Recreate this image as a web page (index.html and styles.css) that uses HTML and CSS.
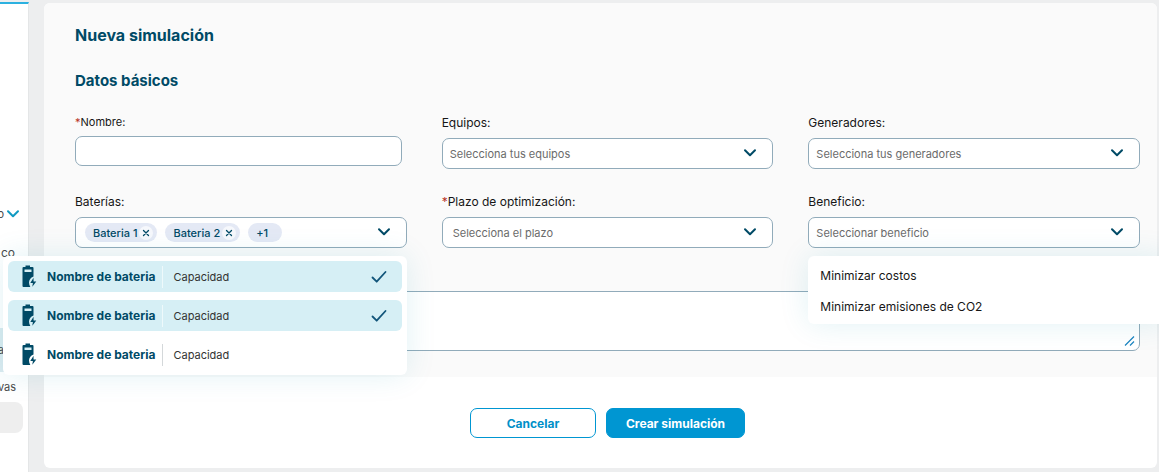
FILE: index.html
```
<!DOCTYPE html>
<html lang="es">
<head>
    <meta charset="utf-8" />
    <title>Nueva simulación</title>
    <link rel="stylesheet" href="styles.css">
</head>
<body>
    <svg width="0" height="0" class="sprite">
        <symbol id="chevron" viewBox="0 0 14 10">
            <path d="M2 2.2l5 5 5-5" fill="none" stroke="currentColor" stroke-width="2" stroke-linecap="round" stroke-linejoin="round" />
        </symbol>
        <symbol id="check" viewBox="0 0 16 14">
            <path d="M1.5 7.5l4.2 4.2L14.5 2" fill="none" stroke="currentColor" stroke-width="1.8" stroke-linecap="round" stroke-linejoin="round" />
        </symbol>
        <symbol id="cross" viewBox="0 0 10 10">
            <path d="M2.5 2.5l5 5m0-5l-5 5" fill="none" stroke="currentColor" stroke-width="1.3" stroke-linecap="round" />
        </symbol>
        <symbol id="battery" viewBox="0 0 16 23">
            <path d="M4.500 0.500h4.500v1.500h2.500a1 1 0 0 1 1 1v8.500c-3 1.200-4.500 3.500-4.500 6 0 1.600.5 3 1.300 4.500H2.500a1 1 0 0 1-1-1V3a1 1 0 0 1 1-1h2z" fill="currentColor" />
            <path d="M3.500 4.500h7v2.500h-7z" fill="#d6eff5" />
            <path d="M12.500 12.800L9.300 18h2.600l-.6 3.700 4-5.200h-2.700z" fill="currentColor" />
        </symbol>
    </svg>

    <div class="layout">
        <aside class="sidebar">
            <div class="side-item side-parent">o <svg width="14" height="10"><use href="#chevron" /></svg></div>
            <div class="side-item">co</div>
            <div class="side-item side-active">a</div>
            <div class="side-item side-last">vas</div>
            <div class="side-block"></div>
        </aside>

        <form class="card">
            <section class="content">
                <h1>Nueva simulación</h1>
                <h2>Datos básicos</h2>

                <div class="fields">
                    <div class="field field-name">
                        <label for="nombre"><span class="req">*</span>Nombre:</label>
                        <input type="text" id="nombre" class="box">
                    </div>
                    <div class="field">
                        <label for="equipos">Equipos:</label>
                        <div class="select">
                            <select id="equipos" class="box"><option>Selecciona tus equipos</option></select>
                            <svg class="arrow" width="14" height="10"><use href="#chevron" /></svg>
                        </div>
                    </div>
                    <div class="field">
                        <label for="generadores">Generadores:</label>
                        <div class="select">
                            <select id="generadores" class="box"><option>Selecciona tus generadores</option></select>
                            <svg class="arrow" width="14" height="10"><use href="#chevron" /></svg>
                        </div>
                    </div>

                    <div class="field">
                        <span class="label" id="baterias">Baterías:</span>
                        <div class="select">
                            <div class="box chips" role="combobox" tabindex="0" aria-labelledby="baterias" aria-expanded="true" aria-controls="lista-baterias">
                                <span class="chip">Bateria 1 <button type="button" aria-label="Quitar"><svg width="10" height="10"><use href="#cross" /></svg></button></span>
                                <span class="chip">Bateria 2 <button type="button" aria-label="Quitar"><svg width="10" height="10"><use href="#cross" /></svg></button></span>
                                <span class="chip chip-more">+1</span>
                            </div>
                            <svg class="arrow" width="14" height="10"><use href="#chevron" /></svg>
                        </div>
                        <ul class="menu menu-baterias" id="lista-baterias" role="listbox">
                            <li class="selected" role="option" aria-selected="true">
                                <svg width="16" height="23"><use href="#battery" /></svg>
                                <b>Nombre de bateria</b>
                                <span>Capacidad</span>
                                <svg class="check" width="16" height="14"><use href="#check" /></svg>
                            </li>
                            <li class="selected" role="option" aria-selected="true">
                                <svg width="16" height="23"><use href="#battery" /></svg>
                                <b>Nombre de bateria</b>
                                <span>Capacidad</span>
                                <svg class="check" width="16" height="14"><use href="#check" /></svg>
                            </li>
                            <li role="option" aria-selected="false">
                                <svg width="16" height="23"><use href="#battery" /></svg>
                                <b>Nombre de bateria</b>
                                <span>Capacidad</span>
                            </li>
                        </ul>
                    </div>
                    <div class="field">
                        <label for="plazo"><span class="req">*</span>Plazo de optimización:</label>
                        <div class="select">
                            <select id="plazo" class="box indent"><option>Selecciona el plazo</option></select>
                            <svg class="arrow" width="14" height="10"><use href="#chevron" /></svg>
                        </div>
                    </div>
                    <div class="field">
                        <label for="beneficio">Beneficio:</label>
                        <div class="select">
                            <select id="beneficio" class="box"><option>Seleccionar beneficio</option></select>
                            <svg class="arrow" width="14" height="10"><use href="#chevron" /></svg>
                        </div>
                        <ul class="menu menu-beneficio" role="listbox">
                            <li role="option">Minimizar costos</li>
                            <li role="option">Minimizar emisiones de CO2</li>
                        </ul>
                    </div>
                </div>

                <div class="notes">
                    <textarea class="box" aria-label="Datos básicos"></textarea>
                    <svg class="grip" width="12" height="12" viewBox="0 0 12 12">
                        <path d="M1 10.500L10 1.500M6 10.500l4-4" fill="none" stroke="#1b84c0" stroke-width="1.200" />
                    </svg>
                </div>
            </section>

            <footer class="actions">
                <button type="button" class="btn btn-cancel">Cancelar</button>
                <button type="submit" class="btn btn-create">Crear simulación</button>
            </footer>
        </form>
    </div>
</body>
</html>
```
FILE: styles.css
```
* {
    box-sizing: border-box;
    margin: 0;
    padding: 0;
}

body {
    background: #edeeef;
    color: #161616;
    font-family: Inter, "Liberation Sans", sans-serif;
    font-size: 12px;
    overflow-x: hidden;
}

button, input, select, textarea {
    font-family: inherit;
    font-size: inherit;
}

.sprite {
    position: absolute;
}

.layout {
    display: flex;
    gap: 15px;
    min-height: 100vh;
    padding: 2px 2px 0 0;
}

/* menu lateral */
.sidebar {
    flex: none;
    width: 29px;
    padding-top: 191px;
    background: #fff;
    border-top: 2px solid #2cb1e0;
    border-right: 1px solid #e4e6e7;
}

.side-item {
    display: flex;
    justify-content: flex-end;
    align-items: center;
    height: 38px;
    padding-right: 13px;
    color: #4a4a4a;
    white-space: nowrap;
}

.side-parent {
    gap: 2px;
    padding-right: 8px;
    font-size: 11px;
}

.side-parent svg {
    flex: none;
    color: #109ac2;
}

.side-active {
    height: 44px;
    margin-top: 57px;
    padding-right: 24px;
    background: #dcebf0;
    font-size: 11px;
}

.side-last {
    height: 30px;
    padding-right: 12px;
    font-size: 11px;
}

.side-block {
    width: 23px;
    height: 31px;
    background: #eee;
    border-radius: 0 8px 8px 0;
}

/* formulario */
.card {
    flex: 1;
    align-self: flex-start;
    min-width: 0;
    margin-top: 1px;
    background: #fff;
    border-radius: 6px;
}

.content {
    padding: 20px 17px 26px 31px;
    background: #fafafa;
    border-radius: 6px 6px 0 0;
}

h1 {
    color: #004a66;
    font-size: 16px;
    line-height: 24px;
}

h2 {
    margin: 24px 0 22px;
    color: #004a66;
    font-size: 15px;
    line-height: 20px;
}

.fields {
    display: grid;
    grid-template-columns: repeat(3, 1fr);
    gap: 23px 35px;
}

.field {
    position: relative;
    min-width: 0;
}

label, .label {
    display: block;
    margin-bottom: 5px;
    line-height: 20px;
}

.field-name {
    margin-right: 5px;
}

.field-name label {
    font-size: 11px;
    line-height: 18px;
}

.req {
    color: #b8321f;
}

.box {
    display: block;
    width: 100%;
    height: 31px;
    padding: 0 7px;
    background: #fff;
    border: 1px solid #91abba;
    border-radius: 7px;
    color: #6b6b6b;
    font-size: 11px;
    appearance: none;
}

.field-name .box {
    height: 30px;
}

.indent {
    padding-left: 10px;
}

.select {
    position: relative;
}

.arrow {
    position: absolute;
    top: 10px;
    right: 16px;
    color: #004a66;
    pointer-events: none;
}

.chips {
    display: flex;
    align-items: center;
    gap: 8px;
    padding-left: 9px;
}

.chip {
    display: flex;
    align-items: center;
    gap: 2px;
    height: 19px;
    padding: 0 4px 0 8px;
    background: #e4e9f5;
    border-radius: 10px;
    color: #004a66;
    font-weight: 500;
}

.chip button {
    display: flex;
    padding: 2px;
    background: #f6f8fc;
    border: 0;
    border-radius: 50%;
    color: #004a66;
}

.chip-more {
    padding-right: 14px;
}

/* listas desplegables */
.menu {
    position: absolute;
    top: 64px;
    z-index: 2;
    background: #fff;
    border-radius: 6px;
    box-shadow: 0 0 30px rgba(0, 150, 170, .12);
    list-style: none;
}

.menu-baterias {
    display: flex;
    flex-direction: column;
    gap: 8px;
    left: -72px;
    right: 0;
    padding: 5px;
}

.menu-baterias li {
    display: flex;
    align-items: center;
    height: 31px;
    padding: 0 15px 0 13px;
    border-radius: 6px;
    color: #004a66;
}

.menu-baterias .selected {
    background: #d6eff5;
}

.menu-baterias b {
    margin-left: 10px;
    padding-right: 7px;
}

.menu-baterias span {
    padding-left: 10px;
    border-left: 1px solid #d4d8da;
    color: #333;
    font-size: 11px;
    line-height: 22px;
}

.menu-baterias .selected span {
    border-color: #eef9fb;
}

.menu-baterias .check {
    margin-left: auto;
    color: #12557a;
}

.menu-beneficio {
    left: 0;
    width: 360px;
    padding: 4px 12px 2px;
}

.menu-beneficio li {
    line-height: 31px;
}

.notes {
    position: relative;
    margin-top: 43px;
}

.notes .box {
    height: 60px;
    resize: none;
}

.grip {
    position: absolute;
    right: 4px;
    bottom: 4px;
}

.actions {
    display: flex;
    justify-content: center;
    gap: 10px;
    padding: 31px 0 30px 14px;
}

.btn {
    height: 30px;
    border: 1px solid #0096d2;
    border-radius: 7px;
    font-weight: 700;
}

.btn-cancel {
    width: 126px;
    background: #fff;
    color: #0090c8;
}

.btn-create {
    width: 139px;
    background: #0096d2;
    color: #fff;
}
```
